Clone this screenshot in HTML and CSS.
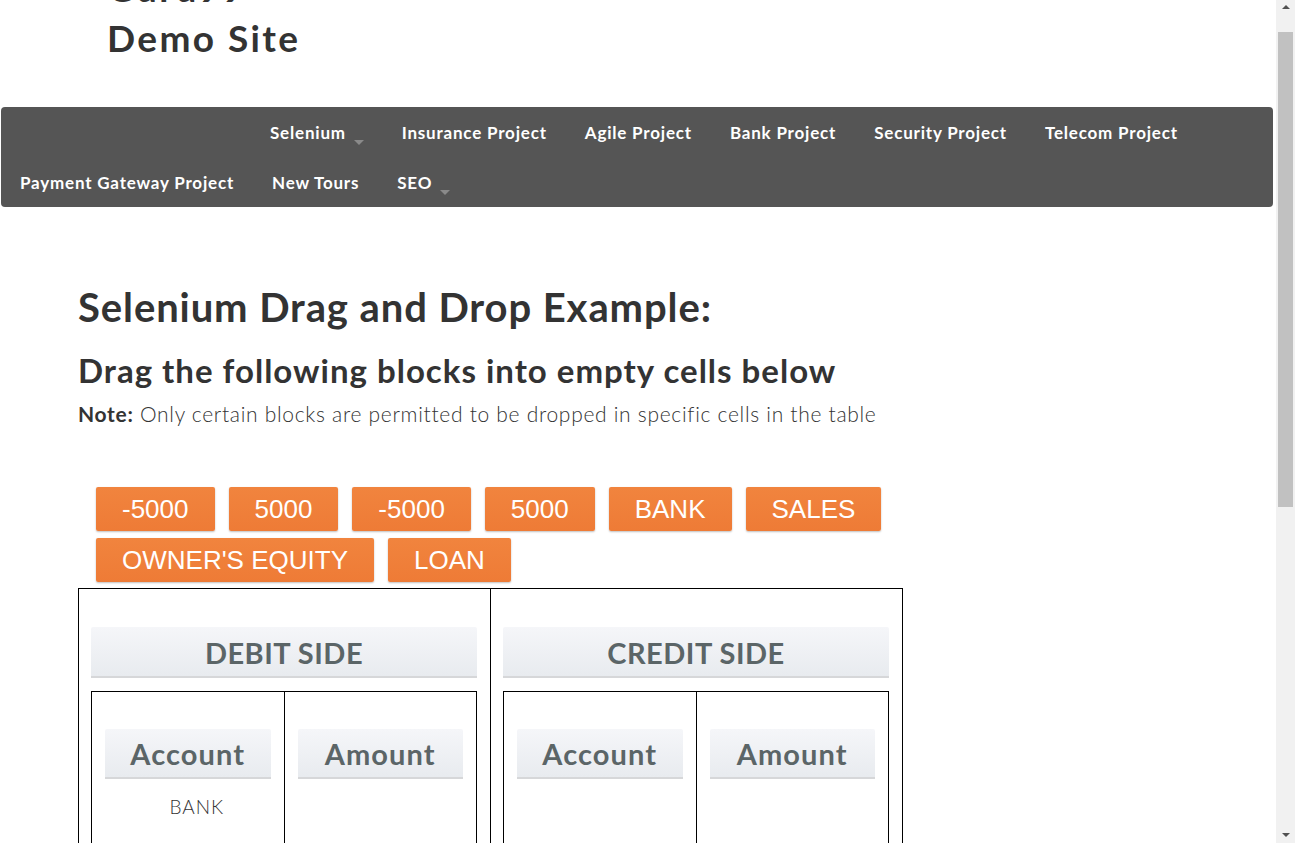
FILE: index.html
```html
<!DOCTYPE html>
<html lang="en">
<head>
<meta charset="utf-8">
<title>Selenium Drag and Drop Example</title>
<link rel="stylesheet" href="styles.css">
</head>
<body>
<header class="site-header">
  <div class="brand-line">Guru99</div>
  <div class="brand-line">Demo Site</div>
</header>
<nav class="navbar">
  <ul class="nav-list">
    <li class="nav-brand"></li>
    <li class="nav-item"><a href="#">Selenium <span class="caret"></span></a></li>
    <li class="nav-item"><a href="#">Insurance Project</a></li>
    <li class="nav-item"><a href="#">Agile Project</a></li>
    <li class="nav-item"><a href="#">Bank Project</a></li>
    <li class="nav-item"><a href="#">Security Project</a></li>
    <li class="nav-item"><a href="#">Telecom Project</a></li>
    <li class="nav-break"></li>
    <li class="nav-item"><a href="#">Payment Gateway Project</a></li>
    <li class="nav-item"><a href="#">New Tours</a></li>
    <li class="nav-item"><a href="#">SEO <span class="caret"></span></a></li>
  </ul>
</nav>
<main class="content">
  <h2 class="title">Selenium Drag and Drop Example:</h2>
  <h3 class="subtitle">Drag the following blocks into empty cells below</h3>
  <p class="note"><b>Note:</b> Only certain blocks are permitted to be dropped in specific cells in the table</p>
  <div class="blocks">
    <span class="block">-5000</span>
    <span class="block">5000</span>
    <span class="block">-5000</span>
    <span class="block">5000</span>
    <span class="block">BANK</span>
    <span class="block">SALES</span>
    <span class="block">OWNER'S EQUITY</span>
    <span class="block">LOAN</span>
  </div>
  <div class="ledger">
    <div class="side">
      <div class="side-head">DEBIT SIDE</div>
      <div class="inner">
        <div class="col">
          <div class="col-head">Account</div>
          <div class="drop">BANK</div>
        </div>
        <div class="col">
          <div class="col-head">Amount</div>
          <div class="drop"></div>
        </div>
      </div>
    </div>
    <div class="side">
      <div class="side-head">CREDIT SIDE</div>
      <div class="inner">
        <div class="col">
          <div class="col-head">Account</div>
          <div class="drop"></div>
        </div>
        <div class="col">
          <div class="col-head">Amount</div>
          <div class="drop"></div>
        </div>
      </div>
    </div>
  </div>
</main>
<div class="scrollbar" aria-hidden="true">
  <span class="sb-arrow sb-up"></span>
  <span class="sb-thumb"></span>
  <span class="sb-arrow sb-down"></span>
</div>
</body>
</html>
```
FILE: styles.css
```css
html, body {
  margin: 0;
  padding: 0;
}
body {
  font-family: "Lato", "Noto Sans", sans-serif;
  color: #333;
  background: #fff;
  overflow: hidden;
}
.site-header {
  height: 144px;
  margin-top: -37px;
  padding-left: 107px;
  box-sizing: border-box;
}
.brand-line {
  font-size: 37px;
  font-weight: 700;
  line-height: 50px;
  letter-spacing: 2.4px;
  color: #333;
}
.navbar {
  margin: 0 22px 0 1px;
  background: #555;
  border-radius: 4px;
  height: 100px;
}
.nav-list {
  list-style: none;
  margin: 0;
  padding: 0;
  display: flex;
  flex-wrap: wrap;
}
.nav-brand {
  width: 250px;
  height: 50px;
}
.nav-break {
  flex-basis: 100%;
  height: 0;
}
.nav-item a {
  display: block;
  padding: 0 19px;
  line-height: 52px;
  height: 50px;
  font-size: 17px;
  font-weight: 700;
  letter-spacing: 0.8px;
  color: #fff;
  text-decoration: none;
}
.caret {
  display: inline-block;
  width: 0;
  height: 0;
  margin-left: 3px;
  border-top: 5px solid #8a8a8a;
  border-left: 5px solid transparent;
  border-right: 5px solid transparent;
  vertical-align: -6px;
}
.content {
  padding: 0 0 0 78px;
}
.title {
  margin: 77px 0 0;
  font-size: 40px;
  line-height: 46px;
  font-weight: 700;
  letter-spacing: 0.9px;
  color: #333;
}
.subtitle {
  margin: 20px 0 0;
  font-size: 33px;
  line-height: 40px;
  font-weight: 700;
  letter-spacing: 1px;
  color: #333;
}
.note {
  margin: 10px 0 0;
  font-size: 21px;
  line-height: 28px;
  font-weight: 300;
  letter-spacing: 0.7px;
  color: #333;
}
.note b {
  font-weight: 700;
}
.blocks {
  display: flex;
  flex-wrap: wrap;
  gap: 7px 14px;
  width: 800px;
  margin: 59px 0 0 18px;
}
.block {
  display: block;
  height: 44px;
  box-sizing: border-box;
  padding: 0 26px;
  line-height: 44px;
  font-family: "Liberation Sans", Arial, sans-serif;
  font-size: 26px;
  color: #fff;
  background: linear-gradient(#f1843e, #ee7b36);
  border-radius: 2px;
  box-shadow: 0 1px 2px rgba(0,0,0,0.25);
}
.ledger {
  display: flex;
  width: 825px;
  box-sizing: border-box;
  border: 1px solid #000;
  margin-top: 6px;
}
.side {
  flex: 1;
  padding: 38px 13px 0 12px;
  min-height: 800px;
}
.side + .side {
  border-left: 1px solid #000;
}
.side-head, .col-head {
  background: linear-gradient(#f5f6f9, #e8ebef);
  border-bottom: 2px solid #d6d7d9;
  text-align: center;
  color: #5b6567;
  font-weight: 700;
  font-size: 29px;
  box-sizing: border-box;
  border-radius: 2px 2px 0 0;
}
.side-head {
  height: 51px;
  line-height: 51px;
  letter-spacing: 0.5px;
}
.inner {
  margin-top: 13px;
  display: flex;
  border: 1px solid #000;
}
.col {
  flex: 1;
  padding: 37px 13px 0 13px;
  min-height: 700px;
}
.col + .col {
  border-left: 1px solid #000;
}
.col-head {
  height: 50px;
  line-height: 50px;
  letter-spacing: 1.1px;
}
.drop {
  text-align: center;
  font-size: 19px;
  font-weight: 300;
  letter-spacing: 1px;
  color: #333;
  padding: 16px 0 0 18px;
}
.scrollbar {
  position: fixed;
  top: 0;
  right: 0;
  width: 19px;
  height: 100%;
  background: #f1f1f1;
}
.sb-thumb {
  position: absolute;
  top: 32px;
  left: 2px;
  width: 15px;
  height: 475px;
  background: #c1c1c1;
}
.sb-arrow {
  position: absolute;
  left: 6px;
  width: 0;
  height: 0;
  border-left: 4px solid transparent;
  border-right: 4px solid transparent;
}
.sb-up {
  top: 5px;
  border-bottom: 4px solid #505050;
}
.sb-down {
  bottom: 6px;
  border-top: 4px solid #505050;
}
```
